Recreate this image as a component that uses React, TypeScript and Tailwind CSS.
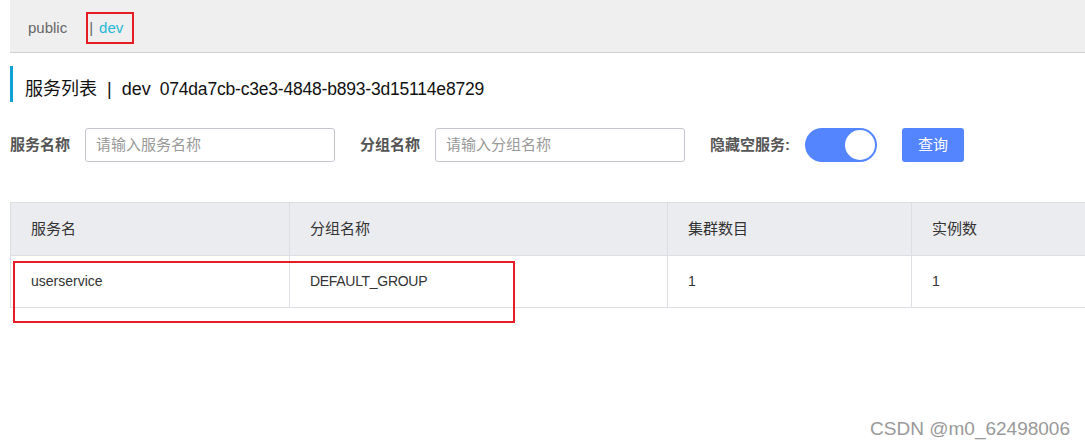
import React from "react";

const font = { fontFamily: '"Liberation Sans", "Noto Sans CJK SC", sans-serif' };

export default function App() {
  return (
    <div className="relative w-[1085px] h-[445px] bg-white overflow-hidden" style={font}>
      {/* top namespace bar */}
      <div className="ml-[10px] h-[53px] bg-[#efefef] border-b border-[#d0d0d0] flex items-center pt-[5px] text-[15px]">
        <span className="ml-[18px] text-[#666]">public</span>
        <div className="relative ml-[21px] h-[32px] flex items-center">
          <span className="text-[#666] ml-[1px]">|</span>
          <span className="ml-[6px] text-[#26b7d6]">dev</span>
          <div className="absolute left-[-2px] top-[-1px] w-[48px] h-[32px] border-2 border-[#e51c23]" />
        </div>
      </div>

      {/* title */}
      <div className="mt-[13px] ml-[10px] h-[36px] border-l-[3px] border-[#0ea0d6] flex items-center pl-[12px] pt-[10px] text-[18px] text-[#111]">
        <span>服务列表</span>
        <span className="mx-[10px]">|</span>
        <span>dev</span>
        <span className="ml-[9px] text-[17.5px] tracking-[-0.2px]">074da7cb-c3e3-4848-b893-3d15114e8729</span>
      </div>

      {/* form row */}
      <div className="mt-[26px] ml-[10px] flex items-center h-[34px] text-[15px]">
        <span className="font-bold text-[#555] w-[75px]">服务名称</span>
        <div className="w-[250px] h-[34px] border border-[#c4c6cf] rounded-[3px] flex items-center pl-[10px] text-[#999]">
          请输入服务名称
        </div>
        <span className="font-bold text-[#555] ml-[25px] w-[75px]">分组名称</span>
        <div className="w-[250px] h-[34px] border border-[#c4c6cf] rounded-[3px] flex items-center pl-[10px] text-[#999]">
          请输入分组名称
        </div>
        <span className="font-bold text-[#555] ml-[25px] w-[95px]">隐藏空服务:</span>
        <div className="w-[72px] h-[34px] rounded-full bg-[#5584ff] flex items-center justify-end pr-[2px]">
          <div className="w-[30px] h-[30px] rounded-full bg-white" />
        </div>
        <div className="ml-[25px] w-[62px] h-[34px] rounded-[3px] bg-[#5584ff] text-white flex items-center justify-center">
          查询
        </div>
      </div>

      {/* table */}
      <div className="mt-[40px] ml-[10px] text-[14px] text-[#333]">
        <div className="grid grid-cols-[279px_378px_244px_200px] bg-[#ebecf0] border-t border-l border-[#dcdee3] h-[54px] text-[15px]">
          <div className="flex items-center pl-[20px] border-r border-b border-[#dcdee3]">服务名</div>
          <div className="flex items-center pl-[20px] border-r border-b border-[#dcdee3]">分组名称</div>
          <div className="flex items-center pl-[20px] border-r border-b border-[#dcdee3]">集群数目</div>
          <div className="flex items-center pl-[20px] border-b border-[#dcdee3]">实例数</div>
        </div>
        <div className="grid grid-cols-[279px_378px_244px_200px] border-l border-[#dcdee3] h-[52px]">
          <div className="flex items-center pl-[20px] border-r border-b border-[#dcdee3]">userservice</div>
          <div className="flex items-center pl-[20px] border-r border-b border-[#dcdee3] tracking-[-0.3px]">DEFAULT_GROUP</div>
          <div className="flex items-center pl-[20px] border-r border-b border-[#dcdee3]">1</div>
          <div className="flex items-center pl-[20px] border-b border-[#dcdee3]">1</div>
        </div>
      </div>

      {/* red highlight over row */}
      <div className="absolute left-[13px] top-[261px] w-[502px] h-[62px] border-2 border-[#e51c23]" />

      {/* watermark */}
      <div className="absolute right-[15px] top-[415px] text-[19px] text-[#999]">CSDN @m0_62498006</div>
    </div>
  );
}
